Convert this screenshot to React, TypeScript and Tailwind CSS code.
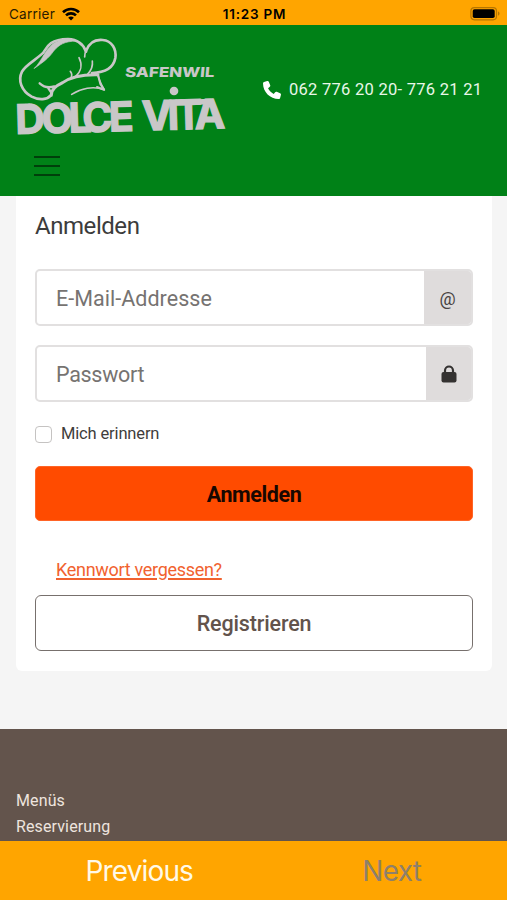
import React from "react";

function StatusBar() {
  return (
    <header className="flex h-[25px] shrink-0 items-center justify-between bg-[#ffa500] pl-[9px] pr-[7px] pt-[3px] font-['Inter',sans-serif] text-black">
      <div className="flex w-[120px] items-center gap-[7px]">
        <span className="text-[13.5px] leading-5 tracking-[0.25px] text-[#2b1c00]">Carrier</span>
        <svg width="18" height="14" viewBox="0 0 18 14" fill="none" stroke="black" strokeWidth="2.6">
          <path d="M1 5.2C5.4.9 12.6.9 17 5.2" />
          <path d="M4 8.4c2.8-2.7 7.2-2.7 10 0" />
          <path d="M9 13.6 6.2 10.7c1.6-1.5 4-1.5 5.6 0Z" fill="black" stroke="none" />
        </svg>
      </div>
      <span className="text-[13.5px] font-semibold leading-5 tracking-[0.75px]">11:23 PM</span>
      <div className="flex w-[120px] justify-end">
        <svg width="30" height="14" viewBox="0 0 30 14">
          <rect x=".9" y=".6" width="25.6" height="12.2" rx="3.5" fill="none" stroke="#b67600" strokeWidth="1.2" />
          <rect x="2.7" y="2.3" width="22" height="8.8" rx="1.8" fill="black" />
          <path d="M28 4.6c2 .7 2 3.5 0 4.2Z" fill="#b67600" />
        </svg>
      </div>
    </header>
  );
}

function Logo() {
  return (
    <svg width="240" height="120" viewBox="0 0 720 360" className="block" fill="none" stroke="#c9c7c8" strokeLinecap="round" strokeLinejoin="round">
      <path d="M152 211C142 224 118 227 95 215C64 197 53 166 66 140C77 119 109 104 130 83C141 65 150 43 204 42C235 43 250 57 258 80" strokeWidth="8" />
      <path d="M103 130C128 106 135 70 167 51C183 42 211 39 230 48C194 49 178 58 161 78C146 100 129 112 103 130Z" fill="#c9c7c8" strokeWidth="2" />
      <path d="M258 78C268 51 286 43 308 45C336 47 350 73 346 99C340 130 312 143 276 144" strokeWidth="8" />
      <path d="M258 76C255 83 254 86 254 96" strokeWidth="5" />
      <path d="M154 211C154 191 170 182 188 173C216 152 252 148 294 149" strokeWidth="9" />
      <path d="M294 149C297 166 303 178 313 195C280 181 242 191 215 208" strokeWidth="5" />
      <path d="M294 150 301 177 312 194 291 186" strokeWidth="6" />
      <path d="M119 175C133 188 147 189 163 184M145 190 155 204" strokeWidth="7" />
      <path d="M237 98C248 119 243 140 227 154M277 108C279 124 272 138 263 147M211 139C218 147 216 152 213 158" strokeWidth="5" />
      <g fill="#c9c7c8" fontFamily="Inter, sans-serif" strokeLinejoin="miter">
        <text x="374" y="157" fontSize="41" fontWeight="800" textLength="268" lengthAdjust="spacingAndGlyphs" stroke="none" transform="translate(14 0) skewX(-5)">SAFENWIL</text>
        <g transform="rotate(-1.6 54 326)" fontSize="122" fontWeight="700" strokeWidth="4">
          <text x="47 126 207 248 328" y="327">DOLCE</text>
          <text x="427 504 527 585" y="327">VITA</text>
        </g>
        <path d="M512 225 632 221V238L512 242Z" stroke="none" />
        <circle cx="522" cy="198" r="13" stroke="none" />
      </g>
    </svg>
  );
}

function SiteHeader() {
  return (
    <div className="h-[171px] shrink-0 bg-[#008117]">
      <div className="flex h-[120px]">
        <Logo />
        <a className="ml-[23px] mt-[54px] flex h-[22px] items-center gap-[8px] whitespace-nowrap text-[16.5px] tracking-[0.27px] text-[#e9f7e9]">
          <svg width="18" height="18" viewBox="0 0 512 512" fill="white">
            <path d="M164.9 24.6c-7.7-18.6-28-28.5-47.4-23.2l-88 24C12.1 30.2 0 46 0 64c0 247.4 200.6 448 448 448 18 0 33.8-12.1 38.6-29.5l24-88c5.3-19.4-4.6-39.7-23.2-47.4l-96-40c-16.3-6.8-35.2-2.1-46.3 11.6L304.7 368C234.3 334.7 177.3 277.7 144 207.3L193.3 167c13.7-11.2 18.4-30 11.6-46.3l-40-96z" />
          </svg>
          <span className="pt-px">062 776 20 20- 776 21 21</span>
        </a>
      </div>
      <button aria-label="Menü" className="ml-[34px] mt-[11px] flex w-[26px] flex-col gap-[7px]">
        <span className="h-[2px] w-full bg-[#003f0b]" />
        <span className="h-[2px] w-full bg-[#003f0b]" />
        <span className="h-[2px] w-full bg-[#003f0b]" />
      </button>
    </div>
  );
}

function LoginCard() {
  return (
    <form className="ml-4 mr-[15px] flex h-[475px] flex-col rounded-b-md bg-white px-[19px] pt-[13px]">
      <h1 className="h-9 text-[24px] leading-[34px] tracking-[-0.45px] text-[#3c3c3c]">Anmelden</h1>
      <div className="mt-6 flex h-[57px] overflow-hidden rounded-[5px] border-2 border-[#e2e0e0]">
        <input type="email" placeholder="E-Mail-Addresse" className="min-w-0 flex-1 pl-[19px] pt-[4px] text-[21.5px] tracking-[0.03px] outline-none placeholder:text-[#767371]" />
        <span className="flex w-[47px] items-center justify-center bg-[#dfdcdc] pt-px text-[18px] text-[#484342]">@</span>
      </div>
      <div className="mt-[19px] flex h-[57px] overflow-hidden rounded-[5px] border-2 border-[#e2e0e0]">
        <input type="password" placeholder="Passwort" className="min-w-0 flex-1 pl-[19px] pt-[4px] text-[21.5px] tracking-[-0.3px] outline-none placeholder:text-[#767371]" />
        <span className="flex w-[45px] items-center justify-center bg-[#dfdcdc]">
          <svg width="16" height="18" viewBox="0 0 16 18">
            <path d="M4 8V5.5a4 4 0 0 1 8 0V8" fill="none" stroke="#343231" strokeWidth="2.2" />
            <rect x=".5" y="7" width="15" height="10.5" rx="2" fill="#343231" />
          </svg>
        </span>
      </div>
      <label className="mt-[20px] flex h-6 items-center gap-[9px] text-[16.5px] tracking-[-0.15px] text-[#3f3d3c]">
        <input type="checkbox" className="h-[17px] w-[17px] appearance-none rounded-[4px] border-[1.5px] border-[#c5c3c2]" />
        <span>Mich erinnern</span>
      </label>
      <button type="button" className="mt-[20px] h-[55px] shrink-0 rounded-[5px] border border-[#ff6426] bg-[#ff4b00] pt-[3px] text-[21.5px] font-bold tracking-[-0.4px] text-[#180700]">Anmelden</button>
      <a className="ml-[21px] mt-[35px] h-7 self-start text-[18px] leading-7 tracking-[-0.3px] text-[#f1622f] underline decoration-[1.5px] underline-offset-2">Kennwort vergessen?</a>
      <button type="button" className="mt-[11px] h-[56px] shrink-0 rounded-[6px] border-[1.5px] border-[#77706d] pt-[2px] text-[21.5px] font-medium tracking-[-0.15px] text-[#62534c]">Registrieren</button>
    </form>
  );
}

export default function App() {
  return (
    <div className="flex h-[900px] w-[507px] flex-col overflow-hidden bg-[#f5f5f5] font-['Roboto',sans-serif]">
      <StatusBar />
      <SiteHeader />
      <main className="h-[533px] shrink-0">
        <LoginCard />
      </main>
      <footer className="h-[112px] shrink-0 bg-[#63544c] pl-4 pt-[59px] text-[16px] leading-[26px] tracking-[0.12px] text-[#eee4df]">
        <p>Menüs</p>
        <p>Reservierung</p>
      </footer>
      <nav className="grid h-[59px] shrink-0 grid-cols-2 bg-[#ffa500] font-['Inter',sans-serif] text-[28px]">
        <button className="pl-[25px] pt-px tracking-[-0.85px] text-[#fff9e8]">Previous</button>
        <button className="pl-[23px] pt-px tracking-[-0.7px] text-[#8e806b]">Next</button>
      </nav>
    </div>
  );
}
